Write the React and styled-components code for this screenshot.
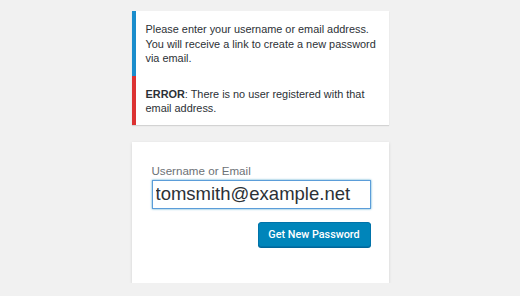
import React from 'react';
import styled, { createGlobalStyle } from 'styled-components';

const GlobalStyle = createGlobalStyle`
    html, body {
        margin: 0;
        padding: 0;
        background: #f1f1f1;
        font-family: "Liberation Sans", Arial, sans-serif;
        color: #333;
    }
`

const Page = styled.div`
    width: 257px;
    margin: 0 auto;
    padding-top: 11px;
    display: flex;
    flex-direction: column;
    gap: 17px;
`

const Notices = styled.div`
    background: #fff;
    box-shadow: 0 1px 1px 0 rgba(0, 0, 0, 0.12);
    display: flex;
    flex-direction: column;
`

const Notice = styled.p`
    margin: 0;
    border-left: 4px solid ${props => props.color};
    padding: ${props => props.pad};
    font-size: 10.9px;
    line-height: 14.5px;
    color: #2c3136;
`

const Form = styled.form`
    background: #fff;
    box-shadow: 0 1px 3px rgba(0, 0, 0, 0.13);
    padding: 22px 18px 36px 20px;
    display: flex;
    flex-direction: column;
    height: 141px;
    box-sizing: border-box;
`

const Label = styled.label`
    font-size: 11.6px;
    line-height: 14px;
    color: #6c7176;
    margin-bottom: 2px;
`

const Input = styled.input`
    box-sizing: border-box;
    width: 219px;
    height: 29px;
    margin: 0;
    padding: 0 3px;
    border: 1px solid #5b9dd9;
    box-shadow: 0 0 2px rgba(30, 140, 190, 0.8);
    outline: none;
    font-family: "Liberation Sans", Arial, sans-serif;
    font-size: 18.5px;
    color: #2c3136;
    background: #fff;
`

const Actions = styled.div`
    display: flex;
    justify-content: flex-end;
    width: 219px;
    margin-top: 13px;
`

const Button = styled.button`
    box-sizing: border-box;
    width: 113px;
    height: 25px;
    padding: 0;
    border: 1px solid #0073aa;
    border-radius: 3px;
    background: #0085ba;
    box-shadow: 0 1px 0 #006799;
    color: #fff;
    font-family: Roboto, "Liberation Sans", Arial, sans-serif;
    font-weight: 500;
    font-size: 10.8px;
    cursor: pointer;
`

export default function App() {
    return (
        <>
            <GlobalStyle />
            <Page>
                <Notices>
                    <Notice color="#1a8dcc" pad="11px 12px 10px 10px">
                        Please enter your username or email address. You will receive a link to create a new password via email.
                    </Notice>
                    <Notice color="#dc3232" pad="11px 12px 9px 10px">
                        <strong>ERROR</strong>: There is no user registered with that email address.
                    </Notice>
                </Notices>
                <Form onSubmit={e => e.preventDefault()}>
                    <Label htmlFor="user_login">Username or Email</Label>
                    <Input id="user_login" type="text" defaultValue="tomsmith@example.net" />
                    <Actions>
                        <Button type="submit">Get New Password</Button>
                    </Actions>
                </Form>
            </Page>
        </>
    );
}
